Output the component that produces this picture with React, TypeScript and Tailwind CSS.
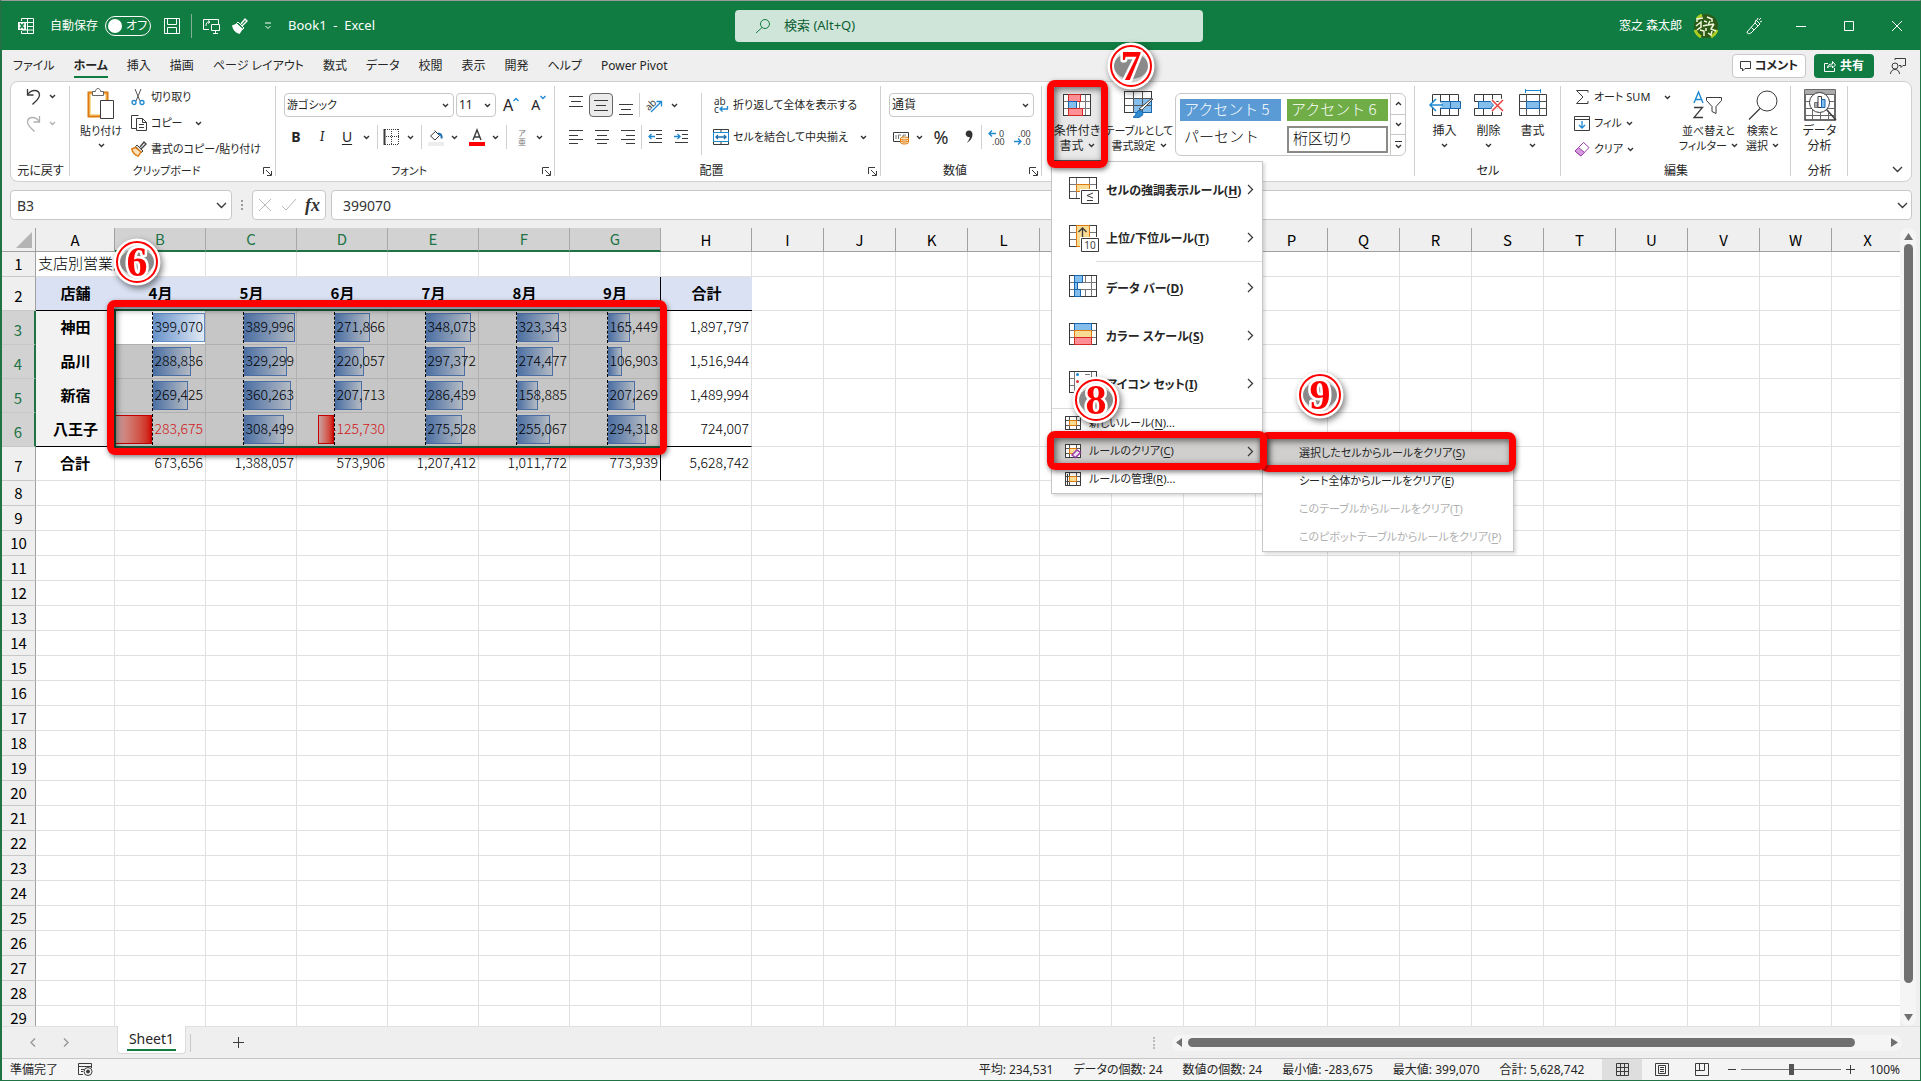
import { FC, ReactNode } from "react";
import clsx from "clsx";

const tabs = ["挿入", "描画", "ページ レイアウト", "数式", "データ", "校閲", "表示", "開発", "ヘルプ", "Power Pivot"];
const columns = "ABCDEFGHIJKLMNOPQRSTUVWX".split("");
const months = ["4月", "5月", "6月", "7月", "8月", "9月"];
const branches = [
  { name: "神田", sales: [399070, 389996, 271866, 348073, 323343, 165449], total: 1897797 },
  { name: "品川", sales: [288836, 329299, 220057, 297372, 274477, 106903], total: 1516944 },
  { name: "新宿", sales: [269425, 360263, 207713, 286439, 158885, 207269], total: 1489994 },
  { name: "八王子", sales: [-283675, 308499, -125730, 275528, 255067, 294318], total: 724007 },
];
const totals = [673656, 1388057, 573906, 1207412, 1011772, 773939, 5628742];
const maxSale = 399070;
const emptyRows = Array.from({ length: 22 }, (_, i) => i + 8);
const restColumns = columns.slice(8);
const summary = ["平均: 234,531", "データの個数: 24", "数値の個数: 24", "最小値: -283,675", "最大値: 399,070", "合計: 5,628,742"];

/* ---------- icons ---------- */

interface SvgProps {
  w: number;
  h: number;
  children: ReactNode;
  className?: string;
}

const Svg: FC<SvgProps> = ({ w, h, children, className }) => (
  <svg
    width={w}
    height={h}
    viewBox={`0 0 ${w} ${h}`}
    fill="none"
    stroke="#3b3b3b"
    className={clsx("shrink-0 overflow-visible", className)}
    aria-hidden="true"
  >
    {children}
  </svg>
);

const Chevron: FC<{ className?: string; color?: string }> = ({ className, color = "#333" }) => (
  <Svg w={7} h={5} className={className}>
    <path d="M1 1l2.5 2.5L6 1" stroke={color} strokeWidth="1.4" />
  </Svg>
);

const BigChevron: FC<{ className?: string }> = ({ className }) => (
  <Svg w={11} h={7} className={className}>
    <path d="M1 1l4.5 4.5L10 1" strokeWidth="1.4" />
  </Svg>
);

const RightChevron: FC<{ className?: string }> = ({ className }) => (
  <Svg w={7} h={11} className={className}>
    <path d="M1 1l4.5 4.5L1 10" strokeWidth="1.3" />
  </Svg>
);

// 28 x 22 sheet that the table style icons are built on
const SheetLines = () => (
  <>
    <rect x=".5" y=".5" width="27" height="21" fill="#fff" />
    <path d="M.5 7.5h27M.5 14.5h27M5.5.5v21M16.5.5v21M22.5.5v21" stroke="#777" />
    <rect x=".5" y=".5" width="27" height="21" />
  </>
);

const CondFormatIcon = () => (
  <Svg w={28} h={22}>
    <SheetLines />
    <rect x="5.5" y=".5" width="12" height="7" fill="#ff9196" stroke="#d42a2a" />
    <rect x="5.5" y="7.5" width="8" height="7" fill="#83beec" stroke="#1666b0" />
    <rect x="5.5" y="14.5" width="14" height="7" fill="#ff9196" stroke="#d42a2a" />
  </Svg>
);

const TableFormatIcon = () => (
  <Svg w={30} h={28}>
    <rect x=".5" y=".5" width="27" height="21" fill="#fff" />
    <path d="M9.5 7.5h18v14h-18z" fill="#83beec" stroke="#1666b0" />
    <path d="M.5 7.5h27M.5 14.5h27M9.5.5v21M18.5.5v21" stroke="#555" />
    <path d="M.5 21.5V.5h27v7" />
    <path d="M29 8L18 19l-3-1L27 8z" fill="#fff" stroke="#444" />
    <path d="M9 26c3 0 2-5 6-6.5c3 0 4.5 2 3.5 4.5-2 3-7 3-9.5 2z" fill="#2e8bd0" stroke="#1666b0" />
  </Svg>
);

const HighlightIcon = () => (
  <Svg w={31} h={28}>
    <path d="M.5.5h27v21H.5z" fill="#fff" />
    <path d="M.5 7.5h27M.5 14.5h27M7.5.5v21M20.5.5v21" stroke="#777" />
    <path d="M7.5 7.5h13v7h-13z" fill="#f8dc93" stroke="#de7a10" />
    <path d="M.5.5h27v21H.5z" />
    <path d="M12.5 13.5h17v13h-17z" fill="#fff" stroke="#fff" strokeWidth="3" />
    <path d="M12.5 13.5h17v13h-17z" fill="#fff" />
    <path d="M24 16l-6 2.5 6 2.5M18 23.5h6" />
  </Svg>
);

const TopBottomIcon = () => (
  <Svg w={31} h={28}>
    <path d="M.5.5h27v21H.5z" fill="#fff" />
    <path d="M.5 7.5h27M.5 14.5h27M7.5.5v21M20.5.5v21" stroke="#777" />
    <path d="M.5.5h27v21H.5z" />
    <path d="M7.5.5h13v21h-13z" fill="#f8dc93" stroke="#de7a10" />
    <path d="M13.5 14V3M9.5 7l4-4 4 4" strokeWidth="1.3" />
    <path d="M12.5 13.5h17v13h-17z" fill="#fff" stroke="#fff" strokeWidth="3" />
    <path d="M12.5 13.5h17v13h-17z" fill="#fff" />
    <text x="21" y="24" textAnchor="middle" fontSize="10" fontWeight="normal" fill="#444" stroke="none">10</text>
  </Svg>
);

const DataBarIcon = () => (
  <Svg w={28} h={22}>
    <SheetLines />
    <path d="M5.5 7.5h17v7h-17z" fill="#fff" stroke="#777" />
    <path d="M5.5.5h8v7h-8zM5.5 7.5h3v7h-3zM5.5 14.5h6v7h-6z" fill="#83beec" stroke="#1666b0" />
  </Svg>
);

const ColorScaleIcon = () => (
  <Svg w={28} h={22}>
    <SheetLines />
    <path d="M5.5.5h17v7h-17z" fill="#83beec" stroke="#1666b0" />
    <path d="M5.5 7.5h17v7h-17z" fill="#f8dc93" stroke="#de7a10" />
    <path d="M5.5 14.5h17v7h-17z" fill="#ff9196" stroke="#d42a2a" />
  </Svg>
);

const IconSetIcon = () => (
  <Svg w={28} h={22}>
    <path d="M.5.5h27v21H.5z" fill="#fff" />
    <path d="M.5 7.5h5M.5 14.5h5M5.5.5v21M22.5.5v21M16 3.5h5M16 10.5h5" stroke="#777" />
    <path d="M.5.5h27v21H.5z" />
    <circle cx="8.5" cy="3.5" r="1.5" fill="#1e88d0" stroke="none" />
    <circle cx="8.5" cy="10.5" r="1.5" fill="#e03b3b" stroke="none" />
    <circle cx="8.5" cy="17.5" r="1.5" fill="#1e88d0" stroke="none" />
  </Svg>
);

const RuleIcon: FC<{ kind: "new" | "clear" | "manage" }> = ({ kind }) => (
  <Svg w={16} h={14}>
    <path d="M.5.5h15v13H.5z" fill="#fff" />
    <path d="M.5 4.5h15M.5 9.5h15M4.5.5v13M11.5.5v13" stroke="#555" />
    <path d="M.5.5h15v13H.5z" />
    <path d="M4.5 4.5h7v5h-7z" fill="#f8dc93" stroke="#de7a10" />
    {kind === "clear" && <path d="M7 11l5-5 3.5 2.5-5 5z" fill="#f3e3f6" stroke="#9a3fa8" strokeWidth="1.5" />}
    {kind === "manage" && <path d="M2.5 2v12" />}
  </Svg>
);

const InsertIcon = () => (
  <Svg w={32} h={22}>
    <path d="M3.5.5h26v21h-26zM11.5.5v21M20.5.5v21" fill="#fff" />
    <path d="M11.5 7.5h20v7h-20z" fill="#83beec" stroke="#1666b0" />
    <path d="M21.5 7.5v7" stroke="#1666b0" />
    <path d="M1.5 11h11" stroke="#fff" strokeWidth="5" />
    <path d="M14 11H1M7 5l-6 6 6 6" stroke="#1e88d0" strokeWidth="1.5" />
  </Svg>
);

const DeleteIcon = () => (
  <Svg w={30} h={22}>
    <path d="M.5.5h27v7h-27zM.5 14.5h27v7h-27zM9.5.5v7M18.5.5v7M9.5 14.5v7M18.5 14.5v7" fill="#fff" />
    <path d="M4.5 7.5h12l3 3.5-3 3.5h-12z" fill="#83beec" stroke="#1666b0" />
    <path d="M18 6l11 11M29 6L18 17" stroke="#fff" strokeWidth="4" />
    <path d="M18 6l11 11M29 6L18 17" stroke="#e8413f" strokeWidth="1.5" />
  </Svg>
);

const FormatIcon = () => (
  <Svg w={28} h={28} className="-mt-1">
    <path d="M6.5 1.5h15M6.5 0v4M21.5 0v4" stroke="#1e88d0" />
    <path d="M.5 5.5h27v21H.5z" fill="#fff" />
    <path d="M.5 12.5h27M.5 19.5h27M7.5 5.5v21M20.5 5.5v21" stroke="#555" />
    <path d="M7.5 12.5h13v7h-13z" fill="#83beec" stroke="#1666b0" />
  </Svg>
);

const PasteIcon = () => (
  <Svg w={28} h={32}>
    <path d="M1.5 4.5h19v24h-19z" fill="#f8dc93" stroke="#de7a10" strokeWidth="2" />
    <path d="M4 7h14v19H4z" fill="#fff" stroke="none" />
    <path d="M5.5 3.5h3c0-4 5-4 5 0h3v4h-11z" fill="#fff" stroke="#666" />
    <path d="M13.5 12.5h13v18h-13z" fill="#fff" />
  </Svg>
);

const CutIcon = () => (
  <Svg w={14} h={17}>
    <path d="M4 0l5 12M10 0L5 12" stroke="#555" />
    <circle cx="3" cy="13.5" r="2" stroke="#1e88d0" strokeWidth="1.3" />
    <circle cx="11" cy="13.5" r="2" stroke="#1e88d0" strokeWidth="1.3" />
  </Svg>
);

const CopyIcon = () => (
  <Svg w={16} h={16}>
    <path d="M5 13.5H.5V.5h7" />
    <path d="M5.5 3.5h6l4 4v8h-10zM11.5 3.5v4h4M8 9.5h5M8 12.5h5" />
  </Svg>
);

const BrushIcon: FC<{ tone?: "white" }> = ({ tone }) => {
  const ink = tone ? "#fff" : "#444";
  const head = tone ? "#fff" : "#de7a10";
  return (
    <Svg w={16} h={16}>
      <path d="M9 6l4-5 2 2-5 5" stroke={ink} strokeWidth="1.4" />
      <path d="M6 4l6 6-1.5 1.5-6-6z" fill={tone ? "#107c41" : "#ddd"} stroke={ink} />
      <path d="M4.5 6.5L.8 8c1 4 3 6 6.5 7.2L10 11z" fill={tone ? "#fff" : "#fbe3bd"} stroke={head} strokeWidth="1.4" />
    </Svg>
  );
};

const Launcher = () => (
  <button aria-label="詳細" className="mr-1">
    <Svg w={9} h={9}>
      <path d="M.5 7V.5H7M3 3l5 5M8.5 4v4.5H4" />
    </Svg>
  </button>
);

const HAlign: FC<{ lines: number[][] }> = ({ lines }) => (
  <Svg w={14} h={15}>
    {lines.map(([x, y, w], i) => (
      <path key={i} d={`M${x} ${y}.5h${w}`} />
    ))}
  </Svg>
);

const IndentIcon: FC<{ d: string }> = ({ d }) => (
  <Svg w={15} h={14}>
    <path d="M1 .5h13M8 4.5h6M8 8.5h6M1 12.5h13" />
    <path d={d} stroke="#1e88d0" strokeWidth="1.3" />
  </Svg>
);

/* ---------- shared pieces ---------- */

const Divider: FC<{ className?: string }> = ({ className }) => (
  <span className={clsx("h-6 w-px shrink-0 bg-[#d0d0d0]", className)} />
);

const Frame: FC<{ className: string }> = ({ className }) => (
  <div
    className={clsx(
      "pointer-events-none absolute z-30 rounded-lg border-[7px] border-[#ff0000] shadow-[1px_2px_5px_rgba(0,0,0,0.5),inset_2px_2px_7px_rgba(0,0,0,0.6)]",
      className
    )}
  />
);

const Badge: FC<{ n: string; className: string }> = ({ n, className }) => (
  <svg
    width="48"
    height="48"
    viewBox="0 0 48 48"
    className={clsx("pointer-events-none absolute z-40 drop-shadow-[2px_3px_3px_rgba(0,0,0,0.5)]", className)}
  >
    <circle cx="24" cy="24" r="20" fill="#f4f4f4" fillOpacity=".7" stroke="#fff" strokeWidth="7" />
    <ellipse cx="24" cy="24" rx="17" ry="13" fill="#8a8a8a" />
    <circle cx="24" cy="24" r="20" fill="none" stroke="#ff0000" strokeWidth="2" />
    <text
      x="24"
      y="38"
      textAnchor="middle"
      fontFamily="Liberation Serif, serif"
      fontWeight="bold"
      fontSize="42"
      fill="#ff0000"
      stroke="#fff"
      strokeWidth="5"
      strokeLinejoin="round"
      paintOrder="stroke"
    >
      {n}
    </text>
  </svg>
);

interface GroupProps {
  label: string;
  width: string;
  compact?: boolean;
  launcher?: boolean;
  children: ReactNode;
}

const Group: FC<GroupProps> = ({ label, width, compact, launcher, children }) => (
  <section className={clsx("relative flex shrink-0 flex-col", width, compact && "text-[11px]")}>
    <div className="h-[79px]">{children}</div>
    <div className="flex h-5 items-center">
      <span className="flex-1 text-center">{label}</span>
      {launcher && <Launcher />}
    </div>
    <span className="absolute right-0 top-1 h-[90px] w-px bg-[#d0d0d0]" />
  </section>
);

const BigButton: FC<{ icon: ReactNode; lines: string[]; chevron?: boolean; className?: string }> = ({
  icon,
  lines,
  chevron,
  className,
}) => (
  <button className={clsx("flex flex-col items-center whitespace-nowrap leading-[15px]", className)}>
    <span className="flex h-9 items-center">{icon}</span>
    <span>{lines[0]}</span>
    <span className="flex h-[15px] items-center gap-1">
      {lines[1]}
      {chevron && <Chevron />}
    </span>
  </button>
);

const Combo: FC<{ label: string; value: string; width: string }> = ({ label, value, width }) => (
  <div className={clsx("relative flex h-6 items-center rounded border border-[#c8c8c8] bg-white", width)}>
    <select aria-label={label} className="h-full w-full appearance-none bg-transparent pl-[2px] outline-none">
      <option>{value}</option>
    </select>
    <Chevron className="pointer-events-none absolute right-1" />
  </div>
);

/* ---------- title bar and tabs ---------- */

const TitleBar = () => (
  <header className="flex h-[49px] shrink-0 items-center bg-[#107c41] text-white">
    <div className="flex flex-1 items-center pl-4">
      <Svg w={16} h={16} className="mr-4">
        <path d="M3.5 3V.5h12v15h-12V13M9.5.5v15M3.5 4.5h12M9 8.5h6M3.5 12h12" stroke="#fff" />
        <path d="M0 4h8v8H0z" fill="#fff" stroke="none" />
        <path d="M2 5.5l4 5M6 5.5l-4 5" stroke="#107c41" strokeWidth="1.5" />
      </Svg>
      <span className="mr-[7px]">自動保存</span>
      <button
        role="switch"
        aria-checked="false"
        aria-label="自動保存"
        className="flex h-5 w-[46px] items-center rounded-full border border-white pl-[2px]"
      >
        <span className="mr-1 size-[14px] rounded-full bg-white" />
        オフ
      </button>
      <button aria-label="上書き保存" className="ml-[13px]">
        <Svg w={16} h={16}>
          <path d="M.5.5h15v15h-15zM3.5.5v6h9v-6M3.5 15.5v-6h9v6" stroke="#fff" />
        </Svg>
      </button>
      <Divider className="ml-[11px] mr-[11px] opacity-60" />
      <button aria-label="画面表示">
        <Svg w={17} h={16}>
          <path d="M6 11.5H.5V1.5h15V6M3 8c0-3 1-4 3-4M5 2.5L7 4 5 5.5" stroke="#fff" />
          <path d="M8.5 6.5h8v6h-8zM12.5 12.5v3M10 15.5h5" stroke="#fff" />
        </Svg>
      </button>
      <button aria-label="書式のコピー" className="ml-3">
        <BrushIcon tone="white" />
      </button>
      <button aria-label="クイック アクセス ツール バーのユーザー設定" className="ml-4">
        <Svg w={8} h={8}>
          <path d="M1 1h6" stroke="#fff" />
          <path d="M1.5 4L4 6.5 6.5 4" stroke="#fff" />
        </Svg>
      </button>
      <h1 className="ml-4 whitespace-pre text-[13px]">Book1  -  Excel</h1>
    </div>
    <label className="ml-[18px] flex h-8 w-[468px] items-center rounded bg-[#cfe5d9] pl-5">
      <Svg w={16} h={16}>
        <circle cx="10" cy="6" r="4.5" stroke="#107c41" />
        <path d="M7 9.5L1 15" stroke="#107c41" />
      </Svg>
      <input
        type="search"
        aria-label="検索"
        placeholder="検索 (Alt+Q)"
        className="ml-[13px] w-full bg-transparent text-[13px] outline-none placeholder:text-[#0d5f33]"
      />
    </label>
    <div className="flex flex-1 items-center justify-end pr-[18px]">
      <span className="mr-3">窓之 森太郎</span>
      <svg width="24" height="24" viewBox="0 0 24 24" fill="none" className="mr-7" aria-hidden="true">
        <circle cx="12" cy="12" r="12" fill="#2c5a17" />
        <path d="M3 5a12 12 0 0 1 5-4M1 16a12 12 0 0 0 6 7M17 23a12 12 0 0 0 6-7" stroke="#a8cc22" strokeWidth="3" />
        <path d="M3 8V5l6-1M13 3l5 2v3M2 12l5-4v5l-4 3M10 7l3 1M9 12l4-1M16 7l-2 4 6-1M20 10l-3 5 5 2M6 16l4 1v5M12 14v3M14 19l3 2 1-4" stroke="#f3f8dc" strokeWidth="1.5" />
      </svg>
      <button aria-label="新機能" className="mr-[34px]">
        <Svg w={16} h={17}>
          <path d="M1 15l8-9 3 3-7 7c-2 1-4 1-4-1zM9 6l1-3 4 4-2 2M5 10l3 3M11 3l1-2M14 5l2-1M13 3l2-2" stroke="#fff" />
        </Svg>
      </button>
      <button aria-label="最小化" className="mr-[38px]">
        <Svg w={10} h={10}>
          <path d="M0 5.5h10" stroke="#fff" />
        </Svg>
      </button>
      <button aria-label="最大化" className="mr-[38px]">
        <Svg w={10} h={10}>
          <path d="M.5.5h9v9h-9z" stroke="#fff" />
        </Svg>
      </button>
      <button aria-label="閉じる">
        <Svg w={10} h={10}>
          <path d="M0 0l10 10M10 0L0 10" stroke="#fff" />
        </Svg>
      </button>
    </div>
  </header>
);

const TabBar = () => (
  <nav className="flex h-[31px] shrink-0 items-center gap-[19px] pl-[11px] pr-[14px] pt-px">
    <a href="#file">ファイル</a>
    <a href="#home" className="relative font-bold">
      ホーム
      <span className="absolute -bottom-1 left-0 h-[2px] w-full bg-[#107c41]" />
    </a>
    {tabs.map((item) => (
      <a key={item} href={`#${item}`} className="whitespace-nowrap">
        {item}
      </a>
    ))}
    <div className="ml-auto flex items-center gap-2 font-bold">
      <button className="flex h-6 w-[74px] items-center justify-center gap-1 rounded border border-[#c8c8c8] bg-white">
        <Svg w={11} h={11}>
          <path d="M.5.5h10v7H5l-2.5 2.5V7.5H.5z" />
        </Svg>
        コメント
      </button>
      <button className="flex h-6 w-[60px] items-center justify-center gap-1 rounded bg-[#107c41] text-white">
        <Svg w={12} h={12}>
          <path d="M4 3.5H.5v8h10V8M3.5 8c0-3 2-4 5-4V1.5L11.5 5 8.5 8V6c-2 0-4 0-5 2z" stroke="#fff" />
        </Svg>
        共有
      </button>
      <button aria-label="アカウント" className="ml-2">
        <Svg w={16} h={17}>
          <circle cx="5" cy="8" r="3" />
          <path d="M.5 16c0-6 9-6 9 0M5 2V.5h10.5v7H13l-2 2V7.5H9" />
        </Svg>
      </button>
    </div>
  </nav>
);

/* ---------- conditional formatting menu ---------- */

const rules = [
  { icon: <HighlightIcon />, text: "セルの強調表示ルール", accessKey: "H" },
  { icon: <TopBottomIcon />, text: "上位/下位ルール", accessKey: "T" },
  { icon: <DataBarIcon />, text: "データ バー", accessKey: "D" },
  { icon: <ColorScaleIcon />, text: "カラー スケール", accessKey: "S" },
  { icon: <IconSetIcon />, text: "アイコン セット", accessKey: "I" },
];

const clearRules = [
  { text: "選択したセルからルールをクリア", accessKey: "S" },
  { text: "シート全体からルールをクリア", accessKey: "E" },
  { text: "このテーブルからルールをクリア", accessKey: "T", disabled: true },
  { text: "このピボットテーブルからルールをクリア", accessKey: "P", disabled: true },
];

const AccessKey: FC<{ k: string }> = ({ k }) => (
  <>
    (<span className="underline underline-offset-2">{k}</span>)
  </>
);

const ClearSubmenu = () => (
  <div className="absolute left-full top-px w-[252px] border border-[#c6c6c6] bg-white shadow-[2px_2px_3px_rgba(0,0,0,0.15)]">
    {clearRules.map((item, i) => (
      <div key={item.accessKey} className="relative">
        <button
          disabled={item.disabled}
          className={clsx(
            "flex h-7 w-full items-center whitespace-nowrap pl-9",
            i === 0 && "bg-[#d0cfcd]",
            item.disabled && "text-[#b0b0b0]"
          )}
        >
          {item.text}
          <AccessKey k={item.accessKey} />
        </button>
        {i === 0 && <Frame className="-inset-x-[3px] -bottom-[5px] -top-[7px]" />}
      </div>
    ))}
  </div>
);

const RulesMenu = () => (
  <div className="absolute left-0 top-full z-20 w-[212px] border border-[#c6c6c6] bg-white pt-[5px] text-[11px] shadow-[2px_2px_3px_rgba(0,0,0,0.15)]">
    {rules.map((item, i) => (
      <div key={item.accessKey}>
        <button className="flex h-12 w-full items-center whitespace-nowrap pl-[17px] pr-2 text-xs font-bold">
          <span className="flex h-7 w-[37px] items-start">{item.icon}</span>
          {item.text}
          <AccessKey k={item.accessKey} />
          <RightChevron className="mb-1 ml-auto" />
        </button>
        {i === 1 && <hr className="-mt-[2px] mb-[3px] ml-11 border-[#dcdcdc]" />}
      </div>
    ))}
    <hr className="-mt-px border-[#dcdcdc]" />
    <button className="flex h-7 w-full items-center gap-2 pl-[13px]">
      <RuleIcon kind="new" />
      <span>
        新しいルール
        <AccessKey k="N" />
        ...
      </span>
    </button>
    <div className="relative">
      <button className="flex h-7 w-full items-center gap-2 bg-[#d0cfcd] pl-[13px] pr-2">
        <RuleIcon kind="clear" />
        <span>
          ルールのクリア
          <AccessKey k="C" />
        </span>
        <RightChevron className="ml-auto" />
      </button>
      <ClearSubmenu />
      <Frame className="-inset-x-[5px] -bottom-[5px] -top-[6px]" />
      <Badge n="8" className="-top-[61px] left-5" />
      <Badge n="9" className="-top-[66px] left-[244px]" />
    </div>
    <button className="flex h-7 w-full items-center gap-2 pl-[13px]">
      <RuleIcon kind="manage" />
      <span>
        ルールの管理
        <AccessKey k="R" />
        ...
      </span>
    </button>
  </div>
);

/* ---------- ribbon ---------- */

const ClipboardGroup = () => (
  <Group label="クリップボード" width="w-[206px]" compact launcher>
    <div className="flex pl-2 pt-[2px]">
      <button className="flex w-[46px] flex-col items-center pt-1">
        <PasteIcon />
        <span className="pt-1">貼り付け</span>
        <Chevron className="mt-1" />
      </button>
      <div className="ml-[7px] flex flex-col">
        <button className="flex h-[26px] items-center gap-[6px]">
          <CutIcon />
          切り取り
        </button>
        <button className="flex h-[26px] items-center gap-1">
          <CopyIcon />
          コピー
          <Chevron className="ml-2" />
        </button>
        <button className="flex h-[26px] items-center gap-1 whitespace-nowrap">
          <BrushIcon />
          書式のコピー/貼り付け
        </button>
      </div>
    </div>
  </Group>
);

const FontGroup = () => (
  <Group label="フォント" width="w-[279px]" compact launcher>
    <div className="flex flex-col gap-2 pl-2 pt-[11px]">
      <div className="flex items-center">
        <Combo label="フォント" value="游ゴシック" width="w-[170px]" />
        <span className="w-[2px]" />
        <div className="text-xs">
          <Combo label="フォント サイズ" value="11" width="w-10" />
        </div>
        <button aria-label="フォント サイズの拡大" className="ml-[7px] flex text-base">
          A
          <Svg w={6} h={5} className="mt-1">
            <path d="M.5 4L3 1.5 5.5 4" stroke="#1e88d0" strokeWidth="1.3" />
          </Svg>
        </button>
        <button aria-label="フォント サイズの縮小" className="ml-3 flex text-sm">
          A
          <Svg w={6} h={5}>
            <path d="M.5 1L3 3.5 5.5 1" stroke="#1e88d0" strokeWidth="1.3" />
          </Svg>
        </button>
      </div>
      <div className="flex h-6 items-center text-sm">
        <button className="w-6 font-bold">B</button>
        <button className="w-7 font-serif italic">I</button>
        <button className="w-[22px] underline underline-offset-2">U</button>
        <Chevron className="ml-[5px]" />
        <Divider className="ml-[7px]" />
        <button aria-label="罫線" className="ml-[6px]">
          <Svg w={15} h={16}>
            <path d="M.5 16V0" strokeWidth="2" />
            <path d="M1 .5h14M14.5 0v16M1 15.5h14M7.5 0v16M0 7.5h15" strokeDasharray="1 1" />
          </Svg>
        </button>
        <Chevron className="ml-2" />
        <Divider className="ml-[7px]" />
        <button aria-label="塗りつぶしの色" className="ml-[6px]">
          <Svg w={16} h={17}>
            <path d="M6.5 1.5l5 5-4.5 4.5L2.5 7 8 2" />
            <path d="M10 4.5c3 0 4 2 3.5 5" stroke="#1e6fb0" strokeWidth="2" />
            <path d="M0 13h16v4H0z" fill="#ededed" stroke="none" />
          </Svg>
        </button>
        <Chevron className="ml-[7px]" />
        <button aria-label="フォントの色" className="ml-[11px]">
          <Svg w={16} h={17}>
            <path d="M4 11L8 1l4 10M5.5 8h5" strokeWidth="1.4" />
            <path d="M0 13h16v4H0z" fill="#ff0000" stroke="none" />
          </Svg>
        </button>
        <Chevron className="ml-[7px]" />
        <Divider className="ml-[7px]" />
        <button
          aria-label="ふりがな"
          className="ml-[10px] flex w-[10px] flex-col items-center text-[8px] leading-[9px] text-[#777]"
        >
          <span>ア</span>
          <span>亜</span>
        </button>
        <Chevron className="ml-[9px]" />
      </div>
    </div>
  </Group>
);

const AlignGroup = () => (
  <Group label="配置" width="w-[326px]" launcher>
    <div className="flex pt-[11px]">
      <div className="flex w-[132px] flex-col gap-2 pl-[14px]">
        <div className="flex h-6 items-center">
          <button aria-label="上揃え" className="pb-2">
            <HAlign lines={[[0, 2, 14], [2, 7, 10], [0, 12, 14]]} />
          </button>
          <button
            aria-label="上下中央揃え"
            className="mx-[6px] flex size-6 items-center justify-center rounded border border-[#666] bg-[#ebebeb]"
          >
            <HAlign lines={[[0, 2, 14], [2, 7, 10], [0, 12, 14]]} />
          </button>
          <button aria-label="下揃え" className="pt-2">
            <HAlign lines={[[0, 2, 14], [2, 7, 10], [0, 12, 14]]} />
          </button>
          <Divider className="mx-[6px]" />
          <button aria-label="方向" className="flex items-center gap-2">
            <Svg w={17} h={16}>
              <text x="-1" y="11" fontSize="10" fill="#444" stroke="none" transform="rotate(-45 5 8)">ab</text>
              <path d="M5 15L15 5M10.5 4.5H15.5V9.5" stroke="#1e88d0" strokeWidth="1.3" />
            </Svg>
            <Chevron />
          </button>
        </div>
        <div className="flex h-6 items-center">
          <button aria-label="左揃え">
            <HAlign lines={[[0, 0, 14], [0, 5, 9], [0, 9, 14], [0, 13, 9]]} />
          </button>
          <button aria-label="中央揃え" className="mx-3">
            <HAlign lines={[[0, 0, 14], [2, 5, 10], [0, 9, 14], [2, 13, 10]]} />
          </button>
          <button aria-label="右揃え">
            <HAlign lines={[[0, 0, 14], [5, 5, 9], [0, 9, 14], [5, 13, 9]]} />
          </button>
          <Divider className="mx-[6px]" />
          <button aria-label="インデントを減らす">
            <IndentIcon d="M7 6.5H1M3.5 4L1 6.5 3.5 9" />
          </button>
          <button aria-label="インデントを増やす" className="ml-[11px]">
            <IndentIcon d="M0 6.5h6M3.5 4L6 6.5 3.5 9" />
          </button>
        </div>
      </div>
      <span className="ml-[14px] mr-[11px] h-[62px] w-px bg-[#d0d0d0]" />
      <div className="flex flex-col gap-2 whitespace-nowrap text-[11px]">
        <button className="flex h-6 items-center gap-1">
          <Svg w={16} h={17}>
            <text x="1" y="8" fontSize="10" fill="#333" stroke="none">ab</text>
            <text x="1" y="16" fontSize="10" fill="#333" stroke="none">c</text>
            <path d="M14.5 9v3H7M9.5 9.5L7 12l2.5 2.5" stroke="#1e88d0" strokeWidth="1.3" />
          </Svg>
          折り返して全体を表示する
        </button>
        <button className="flex h-6 items-center gap-1">
          <Svg w={16} h={16}>
            <path d="M.5.5h15v15H.5zM8 .5v3M8 12.5v3" />
            <path d="M.5 3.5h15v9H.5z" fill="#fff" stroke="#1e88d0" />
            <path d="M3 8h10M5 6L3 8l2 2M11 6l2 2-2 2" stroke="#1e6fb0" strokeWidth="1.3" />
          </Svg>
          セルを結合して中央揃え
          <Chevron className="ml-2" />
        </button>
      </div>
    </div>
  </Group>
);

const NumberGroup = () => (
  <Group label="数値" width="w-[161px]" launcher>
    <div className="flex flex-col gap-2 px-2 pt-[11px]">
      <Combo label="表示形式" value="通貨" width="w-full" />
      <div className="flex h-6 items-center pl-1">
        <button aria-label="通貨表示形式">
          <Svg w={17} h={15}>
            <path d="M.5 2.5h15v9H.5z" />
            <path d="M3 9V5M8 5H5.5v4M13 5h-3v4" stroke="#777" />
            <path d="M7.5 8.5c0-2 8-2 8 0v4c0 2-8 2-8 0z" fill="#fbe3bd" stroke="#de7a10" />
            <path d="M7.5 8.5c0 2 8 2 8 0M7.5 10.5c0 2 8 2 8 0" stroke="#de7a10" />
          </Svg>
        </button>
        <Chevron className="ml-[6px]" />
        <button className="ml-[10px] w-4 text-lg leading-6">%</button>
        <button aria-label="桁区切りスタイル" className="ml-4">
          <Svg w={8} h={14}>
            <path d="M4 .5a3.300 3.300 0 1 0 .8 6.500c-.3 2-1.300 4-3.300 6 4-2 6-5 6-8.500C7.500 2 6 .5 4 .5z" fill="#333" stroke="none" />
          </Svg>
        </button>
        <Divider className="ml-2" />
        <button aria-label="小数点以下の表示桁数を増やす" className="ml-[6px]">
          <Svg w={17} h={17}>
            <path d="M8 4.5H1M4 1.5l-3 3 3 3" stroke="#1e88d0" strokeWidth="1.3" />
            <text x="11" y="8" fontSize="9" fill="#444" stroke="none">0</text>
            <text x="4" y="16" fontSize="9" fill="#444" stroke="none">.00</text>
          </Svg>
        </button>
        <button aria-label="小数点以下の表示桁数を減らす" className="ml-[9px]">
          <Svg w={17} h={17}>
            <text x="4" y="8" fontSize="9" fill="#444" stroke="none">.00</text>
            <path d="M0 12.5h7M4 9.5l3 3-3 3" stroke="#1e88d0" strokeWidth="1.3" />
            <text x="9" y="16" fontSize="9" fill="#444" stroke="none">.0</text>
          </Svg>
        </button>
      </div>
    </div>
  </Group>
);

const StyleGroup = () => (
  <Group label="" width="w-[373px]">
    <div className="flex pl-[9px]">
      <div className="relative h-[79px]">
        <BigButton
          icon={<CondFormatIcon />}
          lines={["条件付き", "書式"]}
          chevron
          className="mt-1 h-[75px] w-[52px] border border-[#555] bg-[#e9e9e9]"
        />
        <RulesMenu />
        <Frame className="-bottom-[7px] -left-1 -right-[5px] -top-[2px]" />
        <Badge n="7" className="-top-10 left-14" />
      </div>
      <BigButton
        icon={<TableFormatIcon />}
        lines={["テーブルとして", "書式設定"]}
        chevron
        className="mt-[5px] w-[72px] text-[11px]"
      />
      <div className="mt-[11px] flex h-[63px] w-[231px] rounded-md border border-[#c8c8c8] font-['Noto_Sans_CJK_JP',sans-serif] text-[15px] font-light text-black [font-feature-settings:normal]">
        <div className="grid flex-1 grid-cols-2 grid-rows-2 gap-x-[6px] pb-[2px] pl-1 pr-[2px] pt-1 leading-[20px]">
          <button className="mt-px h-[22px] bg-[#5b9bd5] pb-[2px] pl-1 text-left text-white">アクセント 5</button>
          <button className="mt-px h-[22px] bg-[#70ad47] pb-[2px] pl-1 text-left text-white">アクセント 6</button>
          <button className="pb-2 pl-1 text-left">パーセント</button>
          <button className="border-2 border-[#8a8a86] bg-white pb-1 pl-1 text-left">桁区切り</button>
        </div>
        <div className="flex w-[15px] flex-col divide-y divide-[#c8c8c8] border-l border-[#c8c8c8]">
          <button aria-label="上へ" className="flex flex-1 items-center justify-center">
            <Chevron className="rotate-180" />
          </button>
          <button aria-label="下へ" className="flex flex-1 items-center justify-center">
            <Chevron />
          </button>
          <button aria-label="その他" className="flex flex-1 flex-col items-center justify-center gap-[2px]">
            <span className="h-px w-[7px] bg-[#333]" />
            <Chevron />
          </button>
        </div>
      </div>
    </div>
  </Group>
);

const CellsGroup = () => (
  <Group label="セル" width="w-[146px]">
    <div className="flex justify-center pl-px pt-[5px]">
      <BigButton icon={<InsertIcon />} lines={["挿入", ""]} chevron className="w-11" />
      <BigButton icon={<DeleteIcon />} lines={["削除", ""]} chevron className="w-11" />
      <BigButton icon={<FormatIcon />} lines={["書式", ""]} chevron className="w-11" />
    </div>
  </Group>
);

const EditGroup = () => (
  <Group label="編集" width="w-[230px]">
    <div className="flex justify-between pl-[13px] pr-3 text-[11px]">
      <div className="flex flex-col whitespace-nowrap pt-[2px]">
        <button className="flex h-[26px] items-center gap-1">
          <Svg w={16} h={16}>
            <path d="M14 3.5V1.5H2.5L9 8l-6.500 6.500H14V12" />
          </Svg>
          オート SUM
          <Chevron className="ml-[10px]" />
        </button>
        <button className="flex h-[26px] items-center gap-1">
          <Svg w={16} h={15}>
            <path d="M.5.5h15v14H.5zM.5 3.5h15" />
            <path d="M8 5v7M5 9l3 3 3-3" stroke="#1e88d0" strokeWidth="1.3" />
          </Svg>
          フィル
          <Chevron />
        </button>
        <button className="flex h-[26px] items-center gap-1">
          <Svg w={16} h={16}>
            <path d="M1 10l8.5-8.5 5.5 5L7 15z" fill="#fff" stroke="#9a3fa8" />
            <path d="M1 10l3.5-3.5 6 5L7 15z" fill="#d79be0" stroke="#9a3fa8" />
          </Svg>
          クリア
          <Chevron />
        </button>
      </div>
      <div className="flex gap-2 pt-[5px]">
        <BigButton
          icon={
            <Svg w={30} h={28}>
              <path d="M1 12L5.5 1 10 12M2.5 8.5h6" stroke="#1e88d0" strokeWidth="1.4" />
              <path d="M1 16.5h8.5L1 26.5h9" strokeWidth="1.3" />
              <path d="M13.5 6.5h15v3l-5.5 6v7l-4-2v-5l-5.5-6z" />
            </Svg>
          }
          lines={["並べ替えと", "フィルター"]}
          chevron
        />
        <BigButton
          icon={
            <Svg w={30} h={30}>
              <circle cx="19" cy="11" r="10" />
              <path d="M12 18.5L1 29.5" strokeWidth="1.3" />
            </Svg>
          }
          lines={["検索と", "選択"]}
          chevron
        />
      </div>
    </div>
  </Group>
);

const AnalysisGroup = () => (
  <Group label="分析" width="w-[57px]">
    <BigButton
      className="w-full pt-[5px]"
      icon={
        <Svg w={32} h={32}>
          <path d="M1 1h30v30H1z" fill="#fff" strokeWidth="1.5" />
          <path d="M1 1h30v4H1z" fill="#aaa" stroke="none" />
          <path d="M1 5.5h30M1 12.5h30M1 19.5h30M1 26.5h30M8.5 20v11M16.5 24v7M24.5 24v7" stroke="#666" />
          <circle cx="15.5" cy="13.5" r="10" fill="#fff" />
          <path d="M22.5 20.5L32 31" strokeWidth="1.5" />
          <path d="M10.5 13.5h3.5v5h-3.5z" fill="#aaa" stroke="#777" />
          <path d="M14 7.5h3.5v11H14z" fill="#fff" />
          <path d="M17.5 10.5h3.5v8h-3.5z" fill="#83beec" stroke="#1666b0" />
        </Svg>
      }
      lines={["データ", "分析"]}
    />
  </Group>
);

const Ribbon = () => (
  <div className="ml-2 mr-2 flex h-[101px] shrink-0 rounded-lg border border-[#d0d0d0] bg-white">
    <Group label="元に戻す" width="w-[59px]">
      <div className="flex flex-col gap-[10px] pl-[15px] pt-[6px]">
        <button aria-label="元に戻す" className="flex items-center gap-2">
          <Svg w={15} h={17}>
            <path d="M1.5 1v6h6M1.5 7C5 1 13 1 13.5 7c0 4-4 6-7 9.5" strokeWidth="1.3" />
          </Svg>
          <Chevron />
        </button>
        <button aria-label="やり直し" disabled className="flex items-center gap-2">
          <Svg w={15} h={17}>
            <path d="M13.5 1v6h-6M13.5 7C10 1 2 1 1.5 7c0 4 4 6 7 9.5" stroke="#b0b0b0" strokeWidth="1.3" />
          </Svg>
          <Chevron color="#b0b0b0" />
        </button>
      </div>
    </Group>
    <ClipboardGroup />
    <FontGroup />
    <AlignGroup />
    <NumberGroup />
    <StyleGroup />
    <CellsGroup />
    <EditGroup />
    <AnalysisGroup />
    <button aria-label="リボンを折りたたむ" className="mb-2 ml-auto mr-2 self-end">
      <BigChevron />
    </button>
  </div>
);

/* ---------- formula bar ---------- */

const FormulaBar = () => (
  <div className="mb-2 ml-2 mr-2 mt-2 flex h-[30px] shrink-0 text-sm text-[#333]">
    <div className="relative flex w-[222px] items-center rounded border border-[#c8c8c8] bg-white">
      <input aria-label="名前ボックス" defaultValue="B3" className="h-full w-full bg-transparent pl-[6px] outline-none" />
      <BigChevron className="absolute right-1" />
    </div>
    <span className="ml-[9px] mr-[9px] w-[2px] self-center border-l-2 border-dotted border-[#999] py-[5px]" />
    <div className="flex w-[74px] items-center justify-between rounded border border-[#c8c8c8] bg-white px-[5px]">
      <button aria-label="キャンセル">
        <Svg w={14} h={14}>
          <path d="M1 1l12 12M13 1L1 13" stroke="#b8b8b8" />
        </Svg>
      </button>
      <button aria-label="入力">
        <Svg w={16} h={14}>
          <path d="M1 8l4 4L15 1" stroke="#b8b8b8" />
        </Svg>
      </button>
      <button aria-label="関数の挿入" className="font-['Liberation_Serif',serif] text-lg font-bold italic leading-6">
        fx
      </button>
    </div>
    <div className="relative ml-[5px] flex flex-1 items-center rounded border border-[#c8c8c8] bg-white">
      <input aria-label="数式バー" defaultValue="399070" className="h-full w-full bg-transparent pl-[11px] outline-none" />
      <BigChevron className="absolute right-[3px]" />
    </div>
  </div>
);

/* ---------- sheet ---------- */

const line = "border-b border-r border-[#e0e0e0]";

const RowHead: FC<{ n: number; tall?: boolean; selected?: boolean }> = ({ n, tall, selected }) => (
  <th
    scope="row"
    className={clsx(
      "border-b border-[#c8c8c8] p-0 text-center font-normal",
      tall && "pt-1",
      selected
        ? "border-r-2 border-r-[#217346] bg-[#d2d2d2] text-[#217346]"
        : "border-r border-r-[#a0a0a0] bg-[#efefef]"
    )}
  >
    {n}
  </th>
);

const RestCells = () => (
  <>
    {restColumns.map((c) => (
      <td key={c} className={line} />
    ))}
  </>
);

const SaleCell: FC<{ value: number; active: boolean }> = ({ value, active }) => {
  const width = Math.round((Math.abs(value) / maxSale) * 52);
  return (
    <td className={clsx("border-b border-r border-[#b0b0b0] p-0 text-sm", active ? "bg-white" : "bg-[#c6c6c6]")}>
      <div className="relative flex h-[33px] items-center justify-end pb-1 pr-[2px]">
        <div className="absolute inset-y-px left-0 flex w-[38px] justify-end border-r border-dashed border-black">
          {value < 0 && (
            <div
              className="my-px border border-[#c00000] bg-linear-to-l from-[#d00000] to-[#c8a0a0]"
              style={{ width }}
            />
          )}
        </div>
        {value > 0 && (
          <div
            className={clsx(
              "absolute inset-y-[2px] left-[38px] border bg-linear-to-r",
              active ? "border-[#638ec6] from-[#6a94ca] to-[#e2eaf5]" : "border-[#4a6ea3] from-[#4d70a3] to-[#b4bac2]"
            )}
            style={{ width }}
          />
        )}
        <span className={clsx("relative", value < 0 && "text-[#d01818]")}>{value.toLocaleString("en-US")}</span>
      </div>
    </td>
  );
};

const Sheet = () => (
  <main className="flex min-h-0 flex-1">
    <div className="relative min-w-0 flex-1 overflow-hidden bg-white font-['Noto_Sans_CJK_JP',sans-serif] text-[15px] leading-[18px] text-black [font-feature-settings:normal]">
      <table className="w-[1902px] table-fixed border-separate border-spacing-0">
        <colgroup>
          <col className="w-[34px]" />
          <col className="w-[79px]" />
          {columns.slice(1, 8).map((c) => (
            <col key={c} className="w-[91px]" />
          ))}
          {restColumns.map((c) => (
            <col key={c} className="w-[72px]" />
          ))}
        </colgroup>
        <thead>
          <tr className="h-6">
            <th className="border-b border-r border-[#a0a0a0] bg-[#efefef] p-0">
              <svg width="16" height="16" viewBox="0 0 16 16" className="ml-auto mr-[3px]" aria-hidden="true">
                <path d="M16 0v16H0z" fill="#b4b4b4" />
              </svg>
            </th>
            {columns.map((c, i) => (
              <th
                key={c}
                scope="col"
                className={clsx(
                  "border-r p-0 font-normal",
                  i > 0 && i < 7
                    ? "border-b-2 border-b-[#217346] border-r-[#a8a8a8] bg-[#d2d2d2] text-[#217346]"
                    : "border-b border-[#a0a0a0] bg-[#efefef]"
                )}
              >
                {c}
              </th>
            ))}
          </tr>
        </thead>
        <tbody className="font-light">
          <tr className="h-[25px]">
            <RowHead n={1} />
            <td className="whitespace-nowrap border-b border-[#e0e0e0] p-0 pb-[2px] pl-[2px]">支店別営業成績</td>
            {columns.slice(1, 8).map((c) => (
              <td key={c} className={line} />
            ))}
            <RestCells />
          </tr>
          <tr className="h-[34px] text-center font-bold">
            <RowHead n={2} tall />
            <td className="border-b border-black bg-[#d9e1f2] p-0 pb-[2px]">店舗</td>
            {months.map((m, i) => (
              <td
                key={m}
                className={clsx("border-b border-black bg-[#d9e1f2] p-0 pb-[2px]", i === 5 && "border-r")}
              >
                {m}
              </td>
            ))}
            <td className="border-b border-black bg-[#d9e1f2] p-0 pb-[2px]">合計</td>
            <RestCells />
          </tr>
          {branches.map((b, row) => (
            <tr key={b.name} className="h-[34px]">
              <RowHead n={row + 3} tall selected />
              <td
                className={clsx(
                  "bg-[#f2f2f2] p-0 pb-[2px] text-center font-bold",
                  row === 3 && "border-b border-black"
                )}
              >
                {b.name}
              </td>
              {b.sales.map((value, i) => (
                <SaleCell key={i} value={value} active={row === 0 && i === 0} />
              ))}
              <td
                className={clsx(
                  "border-b border-r border-r-[#e0e0e0] p-0 pb-1 pr-[2px] text-right text-sm",
                  row === 3 ? "border-b-black" : "border-b-[#e0e0e0]"
                )}
              >
                {b.total.toLocaleString("en-US")}
              </td>
              <RestCells />
            </tr>
          ))}
          <tr className="h-[34px]">
            <RowHead n={7} tall />
            <td className={clsx(line, "p-0 pb-[2px] text-center font-bold")}>合計</td>
            {totals.map((value, i) => (
              <td
                key={i}
                className={clsx(
                  "border-b border-r border-[#e0e0e0] p-0 pb-1 pr-[2px] text-right text-sm",
                  i === 5 && "border-r-black"
                )}
              >
                {value.toLocaleString("en-US")}
              </td>
            ))}
            <RestCells />
          </tr>
          {emptyRows.map((n) => (
            <tr key={n} className="h-[25px]">
              <RowHead n={n} />
              {columns.map((c) => (
                <td key={c} className={line} />
              ))}
            </tr>
          ))}
        </tbody>
      </table>
      <div className="pointer-events-none absolute left-[112px] top-[81px] h-[139px] w-[548px] border-2 border-[#1e5c3b]" />
      <Frame className="left-[105px] top-[72px] h-[155px] w-[560px]" />
      <Badge n="6" className="left-[111px] top-[10px]" />
    </div>
    <div className="mr-1 flex w-4 flex-col items-center rounded-full bg-[#f5f5f5] py-[5px]">
      <Svg w={9} h={7}>
        <path d="M4.5 0L9 7H0z" fill="#707070" stroke="none" />
      </Svg>
      <div className="mb-[31px] mt-1 w-[9px] flex-1 rounded-full bg-[#707070]" />
      <Svg w={9} h={7}>
        <path d="M4.5 7L9 0H0z" fill="#707070" stroke="none" />
      </Svg>
    </div>
  </main>
);

/* ---------- footer ---------- */

const SheetTabs = () => (
  <div className="flex h-8 shrink-0 items-center border-t border-[#e0e0e0] pl-7 pr-[18px]">
    <button aria-label="前のシート">
      <Svg w={6} h={9}>
        <path d="M5 .5l-4 4 4 4" stroke="#999" strokeWidth="1.4" />
      </Svg>
    </button>
    <button aria-label="次のシート" className="ml-[27px]">
      <Svg w={6} h={9}>
        <path d="M1 .5l4 4-4 4" stroke="#999" strokeWidth="1.4" />
      </Svg>
    </button>
    <button className="-mt-px ml-12 flex h-7 w-[69px] items-center justify-center self-start rounded-b border border-t-0 border-[#dcdcdc] bg-white text-sm">
      <span className="border-b-2 border-[#107c41] px-[2px]">Sheet1</span>
    </button>
    <span className="ml-1 h-[18px] w-px bg-[#c8c8c8]" />
    <button aria-label="新しいシート" className="ml-[42px]">
      <Svg w={11} h={11}>
        <path d="M5.5 0v11M0 5.5h11" />
      </Svg>
    </button>
    <span className="ml-auto mr-[17px] h-3 border-l-2 border-dotted border-[#bbb]" />
    <div className="flex h-4 w-[39%] items-center rounded-full bg-[#f5f5f5] px-1">
      <Svg w={6} h={9}>
        <path d="M0 4.5L6 0v9z" fill="#707070" stroke="none" />
      </Svg>
      <div className="ml-[6px] mr-9 h-[9px] flex-1 rounded-full bg-[#707070]" />
      <Svg w={7} h={9}>
        <path d="M7 4.5L0 0v9z" fill="#707070" stroke="none" />
      </Svg>
    </div>
  </div>
);

const StatusBar = () => (
  <footer className="flex h-[22px] shrink-0 items-center border-t border-[#c6c6c6] bg-[#f4f4f4] pl-2 pr-5">
    <span>準備完了</span>
    <Svg w={15} h={13} className="ml-5">
      <path d="M13.5 5V.5H.5v11H5M.5 3.5h13M3 6.5h3M3 8.5h2" />
      <circle cx="10" cy="8.5" r="4" fill="#f4f4f4" />
      <circle cx="10" cy="8.5" r="1.5" fill="#333" />
    </Svg>
    <div className="ml-auto mr-[18px] flex gap-5">
      {summary.map((item) => (
        <span key={item}>{item}</span>
      ))}
    </div>
    <button aria-label="標準" className="flex h-full w-10 items-center justify-center bg-[#dedede]">
      <Svg w={13} h={13}>
        <path d="M.5.5h12v12H.5zM.5 4.5h12M.5 8.5h12M4.5.5v12M8.5.5v12" />
      </Svg>
    </button>
    <button aria-label="ページ レイアウト" className="flex w-10 justify-center">
      <Svg w={14} h={13}>
        <path d="M.5.5h13v12H.5zM3.5 2.5h7v8h-7zM5 4.5h4M5 6.5h4M5 8.5h4" />
      </Svg>
    </button>
    <button aria-label="改ページ プレビュー" className="flex w-10 justify-center">
      <Svg w={14} h={13}>
        <path d="M.5.5h13v12H.5zM4.5.5v7M9.5.5v7M.5 7.5h9" />
      </Svg>
    </button>
    <button aria-label="縮小" className="ml-[6px]">
      <Svg w={8} h={9}>
        <path d="M0 4.5h8" />
      </Svg>
    </button>
    <input
      type="range"
      aria-label="ズーム"
      min={0}
      max={100}
      defaultValue={50}
      className="mx-[5px] h-3 w-[100px] appearance-none bg-[linear-gradient(#777,#777)] bg-[length:100%_1px] bg-center bg-no-repeat [&::-webkit-slider-thumb]:h-[11px] [&::-webkit-slider-thumb]:w-[5px] [&::-webkit-slider-thumb]:appearance-none [&::-webkit-slider-thumb]:bg-[#555]"
    />
    <button aria-label="拡大">
      <Svg w={9} h={9}>
        <path d="M4.5 0v9M0 4.5h9" />
      </Svg>
    </button>
    <span className="ml-[14px]">100%</span>
  </footer>
);

export default function App() {
  return (
    <div className="flex h-screen flex-col overflow-hidden border-2 border-b border-r border-t border-[#217346] border-t-[#9a9a9a] bg-[#efefef] font-['Noto_Sans','Noto_Sans_CJK_JP',sans-serif] text-xs text-[#262626] [font-feature-settings:'palt']">
      <TitleBar />
      <TabBar />
      <Ribbon />
      <FormulaBar />
      <Sheet />
      <SheetTabs />
      <StatusBar />
    </div>
  );
}
